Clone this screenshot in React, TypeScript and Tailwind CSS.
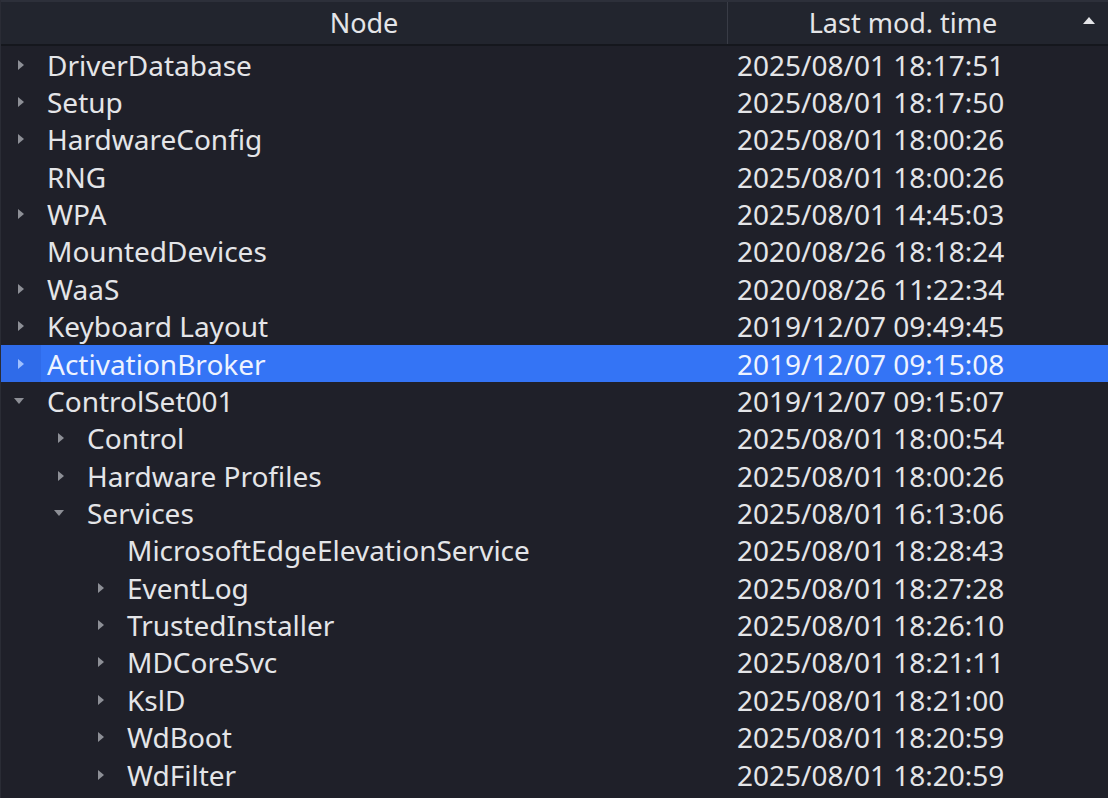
import React from 'react';

type Row = {
  name: string;
  time: string;
  level: number;
  arrow: 'right' | 'down' | null;
  selected?: boolean;
};

const rows: Row[] = [
  { name: 'DriverDatabase', time: '2025/08/01 18:17:51', level: 0, arrow: 'right' },
  { name: 'Setup', time: '2025/08/01 18:17:50', level: 0, arrow: 'right' },
  { name: 'HardwareConfig', time: '2025/08/01 18:00:26', level: 0, arrow: 'right' },
  { name: 'RNG', time: '2025/08/01 18:00:26', level: 0, arrow: null },
  { name: 'WPA', time: '2025/08/01 14:45:03', level: 0, arrow: 'right' },
  { name: 'MountedDevices', time: '2020/08/26 18:18:24', level: 0, arrow: null },
  { name: 'WaaS', time: '2020/08/26 11:22:34', level: 0, arrow: 'right' },
  { name: 'Keyboard Layout', time: '2019/12/07 09:49:45', level: 0, arrow: 'right' },
  { name: 'ActivationBroker', time: '2019/12/07 09:15:08', level: 0, arrow: 'right', selected: true },
  { name: 'ControlSet001', time: '2019/12/07 09:15:07', level: 0, arrow: 'down' },
  { name: 'Control', time: '2025/08/01 18:00:54', level: 1, arrow: 'right' },
  { name: 'Hardware Profiles', time: '2025/08/01 18:00:26', level: 1, arrow: 'right' },
  { name: 'Services', time: '2025/08/01 16:13:06', level: 1, arrow: 'down' },
  { name: 'MicrosoftEdgeElevationService', time: '2025/08/01 18:28:43', level: 2, arrow: null },
  { name: 'EventLog', time: '2025/08/01 18:27:28', level: 2, arrow: 'right' },
  { name: 'TrustedInstaller', time: '2025/08/01 18:26:10', level: 2, arrow: 'right' },
  { name: 'MDCoreSvc', time: '2025/08/01 18:21:11', level: 2, arrow: 'right' },
  { name: 'KslD', time: '2025/08/01 18:21:00', level: 2, arrow: 'right' },
  { name: 'WdBoot', time: '2025/08/01 18:20:59', level: 2, arrow: 'right' },
  { name: 'WdFilter', time: '2025/08/01 18:20:59', level: 2, arrow: 'right' },
];

const indent = ['w-[40px]', 'w-[80px]', 'w-[120px]'];

function Arrow({ dir, selected }: { dir: 'right' | 'down' | null; selected?: boolean }) {
  if (!dir) return null;
  const fill = selected ? '#9fc0ff' : '#8d8f96';
  if (dir === 'right') {
    return (
      <svg width="8" height="12" viewBox="0 0 8 12">
        <path d="M1 1 L7 6 L1 11 Z" fill={fill} />
      </svg>
    );
  }
  return (
    <svg width="12" height="8" viewBox="0 0 12 8">
      <path d="M1 1 L11 1 L6 7 Z" fill={fill} />
    </svg>
  );
}

export default function App() {
  return (
    <div
      className="w-[1108px] h-[798px] overflow-hidden bg-[#1f2029] text-[#e4e5e8] text-[28px] border-l border-[#2a2c35]"
      style={{ fontFamily: '"Noto Sans", "Open Sans", sans-serif' }}
    >
      <div className="flex h-[46px] text-[27px] bg-[#22252e] border-t-2 border-t-[#2d303a] border-b-2 border-b-[#15171d]">
        <div className="w-[727px] flex items-center justify-center border-r border-[#393c46]">Node</div>
        <div className="flex-1 flex items-center relative">
          <span className="flex-1 text-center pr-[30px]">Last mod. time</span>
          <svg className="absolute right-[12px] top-[14px]" width="14" height="9" viewBox="0 0 14 9">
            <path d="M7 1 L13 8 L1 8 Z" fill="#e4e5e8" />
          </svg>
        </div>
      </div>
      {rows.map((r) => (
        <div
          key={r.name}
          className={`flex h-[37.37px] leading-none ${r.selected ? 'bg-[#3474f5] text-[#eef3ff]' : ''}`}
        >
          <div className="w-[727px] flex items-center">
            <div className={`${indent[r.level]} shrink-0 flex items-center justify-end pr-[16px] ${r.selected ? 'bg-[#2f6be9] self-stretch' : ''}`}>
              <Arrow dir={r.arrow} selected={r.selected} />
            </div>
            <span className="pl-[6px] whitespace-nowrap">{r.name}</span>
          </div>
          <div className="flex-1 flex items-center pl-[9px] whitespace-nowrap">{r.time}</div>
        </div>
      ))}
    </div>
  );
}
